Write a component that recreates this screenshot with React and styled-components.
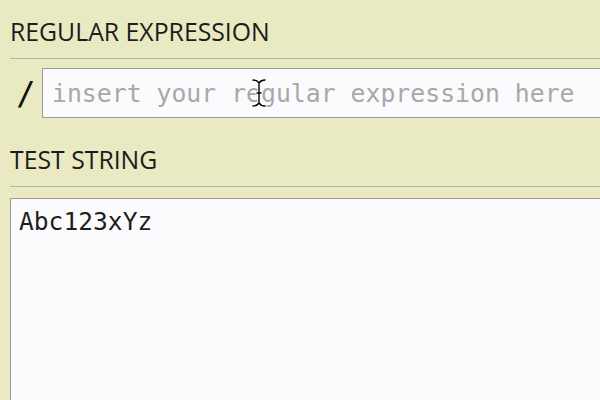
import React from 'react';
import styled, { createGlobalStyle } from 'styled-components';

const GlobalStyle = createGlobalStyle`
  html, body {
    margin: 0;
    padding: 0;
    width: 600px;
    height: 400px;
    overflow: hidden;
    background: #eaeac2;
  }
`;

const Page = styled.div`
  display: flex;
  flex-direction: column;
  width: 620px;
  padding-left: 10px;
  position: relative;
`;

const Heading = styled.h2`
  margin: ${(p) => p.$gap || 0}px 0 0;
  padding: 14px 0 9px;
  font-family: "Open Sans", "Liberation Sans", sans-serif;
  font-weight: 400;
  font-size: 24.8px;
  line-height: 35px;
  color: #1c1c1c;
  border-bottom: 1px solid #b4b4b8;
`;

const ExpressionRow = styled.div`
  display: flex;
  align-items: center;
  margin-top: 9px;
  height: 50px;
`;

const Slash = styled.span`
  width: 32px;
  text-align: center;
  font-family: "DejaVu Sans Mono", monospace;
  font-size: 32px;
  font-weight: 400;
  color: #111;
`;

const ExpressionInput = styled.input`
  flex: 1;
  box-sizing: border-box;
  height: 50px;
  margin: 0;
  padding: 0 0 0 9px;
  border: 1px solid #9a9aa0;
  background: #fbfbfe;
  font-family: "DejaVu Sans Mono", monospace;
  font-size: 24.8px;
  color: #222;
  outline: none;

  &::placeholder {
    color: #a8a8a8;
  }
`;

const TestArea = styled.textarea`
  display: block;
  box-sizing: border-box;
  width: 100%;
  height: 203px;
  margin: 11px 0 0;
  padding: 8px;
  border: 1px solid #9a9aa0;
  background: #fbfbfe;
  font-family: "DejaVu Sans Mono", monospace;
  font-size: 24.6px;
  color: #1e1e1e;
  resize: none;
  outline: none;
`;

const Cursor = styled.svg`
  position: absolute;
  left: 251px;
  top: 78px;
  pointer-events: none;
`;

const IBeam = () => (
  <Cursor width="16" height="30" viewBox="0 0 16 30">
    <g fill="none" strokeLinecap="round">
      <path
        d="M2 2 q4 0 6 3 q2 -3 6 -3 M8 5 v20 M6 15 h4 M2 28 q4 0 6 -3 q2 3 6 3"
        stroke="#fff"
        strokeWidth="3.5"
      />
      <path
        d="M2 2 q4 0 6 3 q2 -3 6 -3 M8 5 v20 M6 15 h4 M2 28 q4 0 6 -3 q2 3 6 3"
        stroke="#000"
        strokeWidth="1.4"
      />
    </g>
  </Cursor>
);

const App = () => {
  return (
    <>
      <GlobalStyle />
      <Page>
        <Heading>REGULAR EXPRESSION</Heading>
        <ExpressionRow>
          <Slash>/</Slash>
          <ExpressionInput placeholder="insert your regular expression here" />
        </ExpressionRow>
        <Heading $gap={10}>TEST STRING</Heading>
        <TestArea defaultValue="Abc123xYz" spellCheck={false} />
        <IBeam />
      </Page>
    </>
  );
};

export default App;
